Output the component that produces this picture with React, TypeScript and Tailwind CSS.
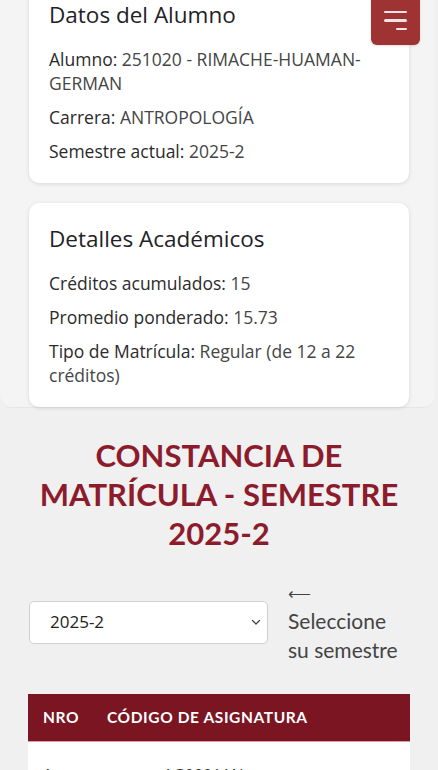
import React from "react";

function Field({ label, value }: { label: string; value: string }) {
  return (
    <p className="text-[17.5px] leading-[24px] text-[#454545]">
      <span className="text-[#2b2b2b]">{label}</span> {value}
    </p>
  );
}

export default function App() {
  return (
    <div
      className="relative min-h-[900px] overflow-hidden bg-[#f0f0f0]"
      style={{ fontFamily: "'Open Sans', Roboto, sans-serif" }}
    >
      {/* Menu button */}
      <button className="absolute right-[18px] top-[-8px] z-10 flex h-[53px] w-[49px] flex-col items-end justify-end gap-[6px] rounded-[6px] bg-[#9f3334] pb-[15px] pr-[13px] shadow-sm">
        <span className="block h-[2.5px] w-[23px] rounded bg-[#f3e4e4]" />
        <span className="block h-[2.5px] w-[23px] rounded bg-[#f3e4e4]" />
        <span className="block h-[2.5px] w-[11px] rounded bg-[#f3e4e4]" />
      </button>

      {/* Top panel */}
      <div className="-mt-[21px] mr-[3px] flex flex-col gap-[20px] rounded-b-[12px] border-b border-[#e6e6e6] bg-[#f4f4f4] pl-[29px]">
        <div className="w-[380px] rounded-[10px] bg-white p-[20px] shadow-[0_1px_4px_rgba(0,0,0,0.12)]">
          <h2 className="text-[22.5px] font-medium leading-[32px] text-[#1f2226]">Datos del Alumno</h2>
          <div className="mt-[16px] flex flex-col gap-[10px]">
            <Field label="Alumno:" value="251020 - RIMACHE-HUAMAN-GERMAN" />
            <Field label="Carrera:" value="ANTROPOLOGÍA" />
            <Field label="Semestre actual:" value="2025-2" />
          </div>
        </div>
        <div className="w-[380px] rounded-[10px] bg-white p-[20px] shadow-[0_1px_4px_rgba(0,0,0,0.12)]">
          <h2 className="text-[22.5px] font-medium leading-[32px] text-[#1f2226]">Detalles Académicos</h2>
          <div className="mt-[16px] flex flex-col gap-[10px]">
            <Field label="Créditos acumulados:" value="15" />
            <Field label="Promedio ponderado:" value="15.73" />
            <Field label="Tipo de Matrícula:" value="Regular (de 12 a 22 créditos)" />
          </div>
        </div>
      </div>

      {/* Title */}
      <h1
        className="mx-auto mt-[28px] w-[400px] text-center text-[31px] font-bold leading-[39px] text-[#8c1c2c]"
        style={{ fontFamily: "Lato, 'Open Sans', sans-serif" }}
      >
        CONSTANCIA DE MATRÍCULA - SEMESTRE 2025-2
      </h1>

      {/* Select row */}
      <div className="mt-[27px] flex items-center gap-[20px] pl-[29px]">
        <div className="relative flex h-[43px] w-[239px] items-center rounded-[5px] border border-[#cfcfcf] bg-white pl-[20px]">
          <span className="text-[17px] text-[#222]">2025-2</span>
          <svg
            className="absolute right-[6px] top-1/2 -translate-y-1/2"
            width="10"
            height="8"
            viewBox="0 0 10 8"
            fill="none"
          >
            <path d="M1.5 2.5 L5 6 L8.5 2.5" stroke="#444" strokeWidth="1.3" strokeLinecap="round" strokeLinejoin="round" />
          </svg>
        </div>
        <div
          className="w-[116px] text-[21px] leading-[29px] text-[#444]"
          style={{ fontFamily: "Lato, 'Open Sans', sans-serif" }}
        >
          <div className="text-[16px] leading-[26px]">⟵</div>
          <div>Seleccione su semestre</div>
        </div>
      </div>

      {/* Table */}
      <div className="ml-[28px] mt-[30px] w-[382px] bg-white">
        <div
          className="flex h-[48px] items-center border-b border-[#d9a0a6] bg-[#7b1522] pl-[15px] text-[15.5px] font-bold tracking-[0.6px] text-white"
          style={{ fontFamily: "Lato, 'Open Sans', sans-serif" }}
        >
          <span className="w-[64px]">NRO</span>
          <span>CÓDIGO DE ASIGNATURA</span>
        </div>
        <div className="flex h-[60px] items-start pl-[15px] pt-[21px] text-[16px] leading-[24px] text-[#333]">
          <span className="w-[120px]">1</span>
          <span>AG0001AN</span>
        </div>
      </div>
    </div>
  );
}
